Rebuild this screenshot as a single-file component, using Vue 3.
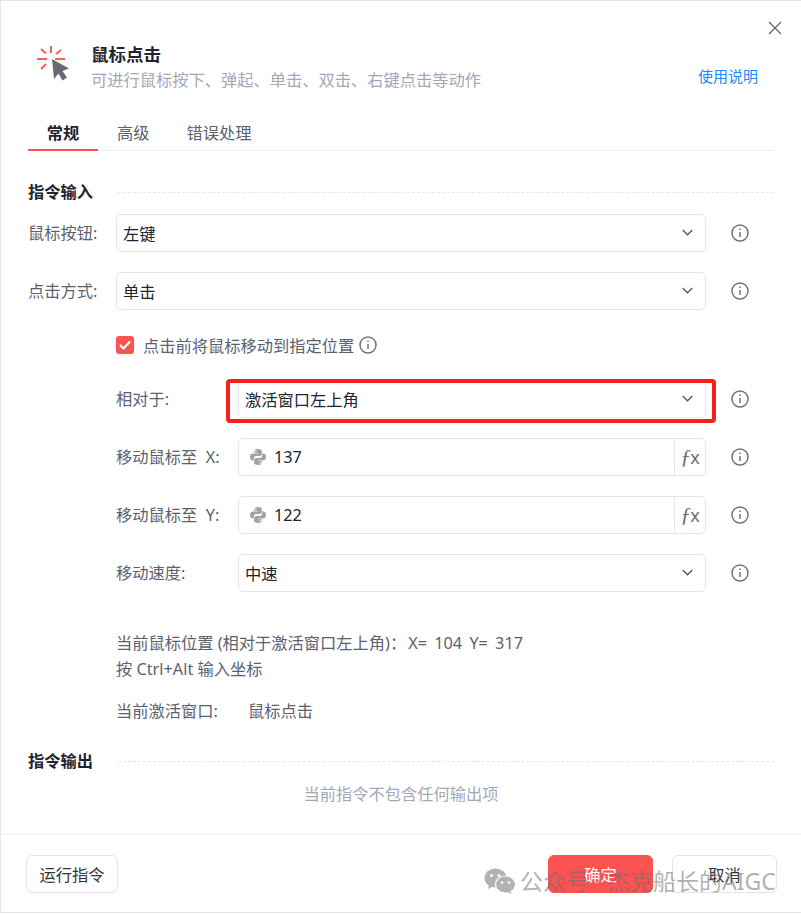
<script setup>
const info = true
</script>

<template>
  <div class="dialog">
    <button class="close" aria-label="关闭">
      <svg width="14" height="14" viewBox="0 0 14 14"><path d="M1 1l12 12M13 1L1 13" stroke="#666" stroke-width="1.3" fill="none" /></svg>
    </button>

    <header class="head">
      <svg class="logo" width="34" height="36" viewBox="0 0 34 36">
        <g stroke="#fb5d5d" stroke-width="2" fill="none">
          <path d="M15 1v7M1 14h10M5 4l5 4.500M25 5l-5 4M5 24l5-5M19 14h10" />
        </g>
        <path d="M16 14l17 9.500-6.500 2.500 4.500 6.500-4.500 3-4-7-4.500 5.500z" fill="#6a6a75" />
      </svg>
      <div class="head-text">
        <div class="title">鼠标点击</div>
        <div class="desc">可进行鼠标按下、弹起、单击、双击、右键点击等动作</div>
      </div>
      <a class="help">使用说明</a>
    </header>

    <nav class="tabs">
      <span class="tab active">常规</span>
      <span class="tab">高级</span>
      <span class="tab">错误处理</span>
    </nav>

    <section class="section-title first">
      <span>指令输入</span><i></i>
    </section>

    <div class="row">
      <label class="lab">鼠标按钮:</label>
      <div class="field"><span>左键</span><svg class="chev" width="11" height="7" viewBox="0 0 11 7"><path d="M.7 1l4.800 4.800L10.300 1" /></svg></div>
      <svg class="info" width="18" height="18" viewBox="0 0 18 18"><circle cx="9" cy="9" r="8" /><path d="M9 8v5M9 4.500v1.500" /></svg>
    </div>

    <div class="row">
      <label class="lab">点击方式:</label>
      <div class="field"><span>单击</span><svg class="chev" width="11" height="7" viewBox="0 0 11 7"><path d="M.7 1l4.800 4.800L10.300 1" /></svg></div>
      <svg class="info" width="18" height="18" viewBox="0 0 18 18"><circle cx="9" cy="9" r="8" /><path d="M9 8v5M9 4.500v1.500" /></svg>
    </div>

    <div class="check-row">
      <span class="check"><svg width="12" height="10" viewBox="0 0 12 10"><path d="M1 5l3.500 3.500L11 1.500" /></svg></span>
      <span class="check-text">点击前将鼠标移动到指定位置</span>
      <svg class="info small" width="18" height="18" viewBox="0 0 18 18"><circle cx="9" cy="9" r="8" /><path d="M9 8v5M9 4.500v1.500" /></svg>
    </div>

    <div class="sub">
      <div class="row sub-row">
        <label class="lab2">相对于:</label>
        <div class="field"><span>激活窗口左上角</span><svg class="chev" width="11" height="7" viewBox="0 0 11 7"><path d="M.7 1l4.800 4.800L10.300 1" /></svg></div>
        <svg class="info" width="18" height="18" viewBox="0 0 18 18"><circle cx="9" cy="9" r="8" /><path d="M9 8v5M9 4.500v1.500" /></svg>
        <div class="highlight"></div>
      </div>

      <div class="row sub-row">
        <label class="lab2">移动鼠标至&nbsp;&nbsp;X:</label>
        <div class="field input">
          <svg class="py" width="18" height="18" viewBox="0 0 18 18"><path d="M8.800 1C5.500 1 5.500 2.300 5.500 3.200V5h3.600v.6H3.700C2.300 5.600 1 6.700 1 9s1.100 3.400 2.400 3.400h1.400v-1.900c0-1.400 1.200-2.600 2.600-2.600h3.400c1.200 0 2.100-1 2.100-2.100V3.200C12.900 1.900 11.800 1 8.800 1zM6.900 2.200a.8.800 0 1 1 0 1.600.8.800 0 0 1 0-1.600z" fill="#a3a3a3" /><path d="M9.200 17c3.300 0 3.300-1.300 3.300-2.200V13H8.900v-.6h5.400c1.400 0 2.700-1.100 2.700-3.400s-1.100-3.400-2.400-3.400h-1.400v1.900c0 1.400-1.200 2.600-2.600 2.600H7.200c-1.200 0-2.100 1-2.100 2.100v2.600c0 1.300 1.100 2.200 4.100 2.200zm1.900-1.200a.8.800 0 1 1 0-1.600.8.800 0 0 1 0 1.600z" fill="#a3a3a3" /></svg>
          <span class="val">137</span>
          <span class="fx"><b>ƒ</b><em>x</em></span>
        </div>
        <svg class="info" width="18" height="18" viewBox="0 0 18 18"><circle cx="9" cy="9" r="8" /><path d="M9 8v5M9 4.500v1.500" /></svg>
      </div>

      <div class="row sub-row">
        <label class="lab2">移动鼠标至&nbsp;&nbsp;Y:</label>
        <div class="field input">
          <svg class="py" width="18" height="18" viewBox="0 0 18 18"><path d="M8.800 1C5.500 1 5.500 2.300 5.500 3.200V5h3.600v.6H3.700C2.300 5.600 1 6.700 1 9s1.100 3.400 2.400 3.400h1.400v-1.900c0-1.400 1.200-2.600 2.600-2.600h3.400c1.200 0 2.100-1 2.100-2.100V3.200C12.900 1.900 11.800 1 8.800 1zM6.900 2.200a.8.800 0 1 1 0 1.600.8.800 0 0 1 0-1.600z" fill="#a3a3a3" /><path d="M9.200 17c3.300 0 3.300-1.300 3.300-2.200V13H8.900v-.6h5.400c1.400 0 2.700-1.100 2.700-3.400s-1.100-3.400-2.400-3.400h-1.400v1.900c0 1.400-1.200 2.600-2.600 2.600H7.200c-1.200 0-2.100 1-2.100 2.100v2.600c0 1.300 1.100 2.200 4.100 2.200zm1.900-1.200a.8.800 0 1 1 0-1.600.8.800 0 0 1 0 1.600z" fill="#a3a3a3" /></svg>
          <span class="val">122</span>
          <span class="fx"><b>ƒ</b><em>x</em></span>
        </div>
        <svg class="info" width="18" height="18" viewBox="0 0 18 18"><circle cx="9" cy="9" r="8" /><path d="M9 8v5M9 4.500v1.500" /></svg>
      </div>

      <div class="row sub-row">
        <label class="lab2">移动速度:</label>
        <div class="field"><span>中速</span><svg class="chev" width="11" height="7" viewBox="0 0 11 7"><path d="M.7 1l4.800 4.800L10.300 1" /></svg></div>
        <svg class="info" width="18" height="18" viewBox="0 0 18 18"><circle cx="9" cy="9" r="8" /><path d="M9 8v5M9 4.500v1.500" /></svg>
      </div>
    </div>

    <div class="notes">
      <p>当前鼠标位置 (相对于激活窗口左上角)：<span class="coords">X= 104 Y= 317</span></p>
      <p>按 Ctrl+Alt 输入坐标</p>
    </div>
    <div class="active-win"><span class="awl">当前激活窗口:</span><span>鼠标点击</span></div>

    <section class="section-title out">
      <span>指令输出</span><i></i>
    </section>
    <div class="empty">当前指令不包含任何输出项</div>

    <footer class="foot">
      <button class="btn">运行指令</button>
      <div class="foot-right">
        <button class="btn primary">确定</button>
        <button class="btn wide">取消</button>
      </div>
    </footer>

    <div class="watermark">
      <svg width="32" height="26" viewBox="0 0 32 26">
        <ellipse cx="11.500" cy="10" rx="11" ry="9.500" fill="#b2b2b2" />
        <path d="M5 16l-1 5 6-3z" fill="#b2b2b2" />
        <ellipse cx="21.500" cy="16.500" rx="10" ry="8.500" fill="#b2b2b2" stroke="#fff" stroke-width="1.200" />
        <path d="M26 23l2 3-5-2z" fill="#b2b2b2" />
        <circle cx="7.500" cy="7.500" r="1.500" fill="#fff" /><circle cx="15" cy="7.500" r="1.500" fill="#fff" />
        <circle cx="18" cy="14.500" r="1.300" fill="#fff" /><circle cx="25" cy="14.500" r="1.300" fill="#fff" />
      </svg>
      <span>公众号 · 杰克船长的AIGC</span>
    </div>
  </div>
</template>

<style scoped>
.dialog {
  position: relative;
  box-sizing: border-box;
  width: 801px;
  height: 913px;
  background: #fff;
  border-top: 1px solid #e4e5ec;
  border-left: 1px solid #e4e5ec;
  border-bottom: 1px solid #e4e5ec;
  font-family: "Noto Sans", "Noto Sans CJK SC", sans-serif;
  font-size: 16.25px;
  color: #5b6170;
  overflow: hidden;
}
.close {
  position: absolute;
  right: 19px;
  top: 20px;
  padding: 0;
  border: 0;
  background: none;
  display: flex;
}
.head {
  display: flex;
  align-items: flex-start;
  height: 95px;
  padding: 44px 43px 0 35px;
  box-sizing: border-box;
}
.logo { flex: none; margin-right: 21px; }
.head-text { flex: 1; margin-top: -2px; }
.title { font-size: 17.500px; font-weight: 700; color: #21242e; line-height: 22px; }
.desc { font-size: 16.25px; color: #a2a8b8; line-height: 22px; margin-top: 4px; }
.help { font-size: 15px; color: #2188f5; margin-top: 21px; line-height: 20px; }

.tabs {
  display: flex;
  margin: 15px 27px 0;
  height: 39px;
  border-bottom: 1px solid #eceef3;
}
.tab {
  box-sizing: border-box;
  height: 40px;
  padding: 10px 19px 0;
  line-height: 24px;
  color: #5b6170;
}
.tab.active {
  width: 70px;
  padding-left: 0;
  padding-right: 0;
  color: #21242e;
  font-weight: 700;
  border-bottom: 2px solid #f95353;
  text-align: center;
}
.tab:nth-child(2) { padding-right: 37px; padding-left: 19px; }
.tab:nth-child(3) { padding-left: 0; }
.section-title {
  display: flex;
  align-items: center;
  margin: 0 27px;
  font-weight: 700;
  color: #21242e;
  line-height: 22px;
  height: 22px;
}
.section-title.first { margin-top: 30px; }
.section-title i {
  flex: 1;
  margin-left: 25px;
  border-top: 1px dashed #e5e6ed;
}
.row {
  position: relative;
  display: flex;
  align-items: center;
  height: 38px;
  margin: 20px 0 0 27px;
  width: 726px;
}
.section-title.first + .row { margin-top: 11px; }
.lab { width: 88px; flex: none; line-height: 38px; }
.lab2 { width: 122px; flex: none; line-height: 38px; white-space: pre; }
.field {
  box-sizing: border-box;
  flex: none;
  width: 590px;
  height: 38px;
  border: 1px solid #e3e5ec;
  border-radius: 5px;
  display: flex;
  align-items: center;
  justify-content: space-between;
  padding: 0 12px 0 6px;
  color: #21242e;
}
.chev { fill: none; stroke: #4d5566; stroke-width: 1.300; margin-top: -2px; }
.info {
  flex: none;
  margin-left: 25px;
  fill: none;
  stroke: #6f7480;
  stroke-width: 1.500;
}
.info.small { margin-left: 5px; }
.check-row {
  display: flex;
  align-items: center;
  height: 24px;
  margin: 23px 0 0 115px;
}
.check {
  width: 18px;
  height: 18px;
  border-radius: 3px;
  background: #f95353;
  display: flex;
  align-items: center;
  justify-content: center;
}
.check svg { fill: none; stroke: #fff; stroke-width: 2.200; }
.check-text { margin-left: 9px; }
.sub { margin-left: 88px; }
.sub-row { width: 638px; }
.sub .sub-row:first-child { margin-top: 23px; }
.sub-row .field { width: 468px; padding-left: 6px; }
.field.input { justify-content: flex-start; padding: 0 0 0 10px; }
.py { flex: none; }
.val { margin-left: 7px; flex: 1; }
.fx {
  box-sizing: border-box;
  width: 31px;
  height: 36px;
  border-left: 1px solid #e3e5ec;
  display: flex;
  align-items: center;
  justify-content: center;
  color: #6f6f6f;
}
.fx b { font: italic 400 22px "Liberation Serif", serif; }
.fx em { font: 400 18px "Noto Sans", sans-serif; margin-left: -1px; }
.highlight {
  position: absolute;
  left: 110px;
  top: -1px;
  width: 490px;
  height: 44px;
  box-sizing: border-box;
  border: 4px solid #f8201a;
  border-radius: 4px;
  pointer-events: none;
}
.notes { margin: 38px 0 0 115px; line-height: 26px; }
.notes p { margin: 0; }
.coords { margin-left: 2px; word-spacing: 3px; }
.active-win { display: flex; margin: 16px 0 0 115px; line-height: 26px; }
.awl { width: 132px; }
.section-title.out { margin-top: 26px; }
.empty { text-align: center; color: #a2a8b8; margin-top: 10px; line-height: 24px; }
.foot {
  position: absolute;
  left: 0;
  right: 0;
  top: 833px;
  height: 78px;
  border-top: 1px solid #eceef3;
  display: flex;
  justify-content: space-between;
  padding: 20px 24px 0 25px;
  box-sizing: border-box;
}
.foot-right { display: flex; gap: 19px; }
.btn {
  box-sizing: border-box;
  width: 92px;
  height: 38px;
  border: 1px solid #e3e5ec;
  border-radius: 6px;
  background: #fff;
  font: inherit;
  color: #33363f;
}
.btn.primary { width: 105px; background: #fb5252; border-color: #fb5252; color: #fff; }
.btn.wide { width: 105px; }
.watermark {
  position: absolute;
  left: 483px;
  top: 866px;
  display: flex;
  align-items: center;
  gap: 4px;
  font-size: 23px;
  line-height: 28px;
  color: rgba(110, 110, 110, .55);
  white-space: nowrap;
}
</style>
